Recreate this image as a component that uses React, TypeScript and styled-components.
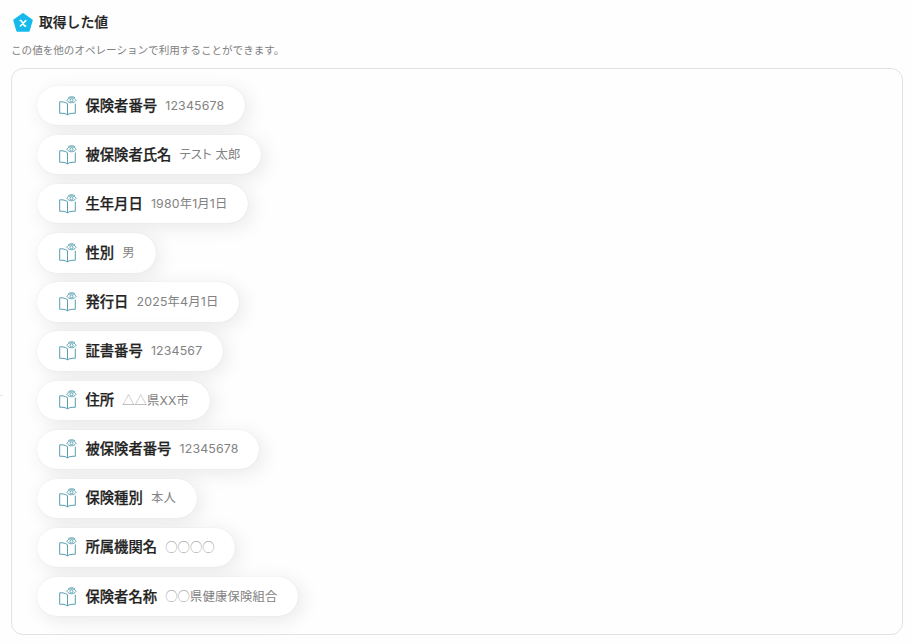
import styled, { createGlobalStyle } from 'styled-components';

const GlobalStyle = createGlobalStyle`
  * {
    box-sizing: border-box;
  }

  body {
    margin: 0;
    background-color: #fefefe;
    font-family: Inter, 'Noto Sans CJK JP', sans-serif;
  }
`;

const StyledPage = styled.div`
  display: flex;
  height: 644px;
  overflow: hidden;
`;

const StyledConnector = styled.div`
  width: 3px;
  height: 1px;
  margin: 395px 8px 0 0;
  background-color: #e8e8e8;
`;

const StyledOutput = styled.main`
  width: 892px;
`;

const StyledHeader = styled.header`
  display: flex;
  align-items: center;
  gap: 5px;
  height: 22px;
  margin: 11px 0 0 1px;

  & > svg {
    display: block;
  }
`;

const StyledTitle = styled.h1`
  margin: 0;
  color: #222;
  font-size: 13.8px;
  font-weight: 500;
  line-height: 22px;
  white-space: nowrap;
  -webkit-text-stroke: 0.25px #222;
`;

const StyledDescription = styled.p`
  margin: 9px 0 0;
  height: 26px;
  color: #808080;
  font-size: 10.6px;
  letter-spacing: -0.03px;
  line-height: 18px;
  white-space: nowrap;
`;

const StyledPanel = styled.section`
  height: 567px;
  padding: 17px 25px;
  border: 1px solid #e2e2e2;
  border-radius: 12px;
`;

const StyledValueList = styled.ul`
  display: flex;
  flex-direction: column;
  align-items: flex-start;
  gap: 9.8px;
  margin: 0;
  padding: 0;
  list-style: none;
`;

const StyledValueItem = styled.li`
  display: flex;
  align-items: center;
  height: 39.3px;
  padding: 0 20.8px 0 21px;
  border-radius: 20px;
  background-color: white;
  box-shadow: 0 0 1px rgba(0, 0, 0, 0.12), 4px 4px 20px rgba(0, 0, 0, 0.09);
  white-space: nowrap;

  & > svg {
    display: block;
    flex: none;
  }
`;

const StyledLabel = styled.span`
  margin-left: 7.4px;
  color: #222;
  font-size: 14.33px;
  font-weight: 500;
  line-height: 22px;
  -webkit-text-stroke: 0.25px #222;
`;

const StyledValue = styled.span`
  margin-left: 8.2px;
  color: #828282;
  font-size: 12.35px;
  letter-spacing: 0.16px;
  line-height: 20px;
  font-feature-settings: 'palt';
`;

const StyledMask = styled.span`
  color: #909090;
  font-family: 'Noto Sans CJK JP', sans-serif;
  font-feature-settings: normal;
  font-weight: 300;
  letter-spacing: 0;
`;

interface OutputValue {
  label: string;
  value: string;
  mask?: string;
}

const values: OutputValue[] = [
  { label: '保険者番号', value: '12345678' },
  { label: '被保険者氏名', value: 'テスト 太郎' },
  { label: '生年月日', value: '1980年1月1日' },
  { label: '性別', value: '男' },
  { label: '発行日', value: '2025年4月1日' },
  { label: '証書番号', value: '1234567' },
  { label: '住所', mask: '△△', value: '県XX市' },
  { label: '被保険者番号', value: '12345678' },
  { label: '保険種別', value: '本人' },
  { label: '所属機関名', mask: '○○○○', value: '' },
  { label: '保険者名称', mask: '○○', value: '県健康保険組合' },
];

function VariableIcon() {
  return (
    <svg width="22" height="22" viewBox="0 0 22 22">
      <path
        d="M11 3L19.8 9.2L16.7 19.8H5.3L2.2 9.2Z"
        fill="#15b9ec"
        stroke="#15b9ec"
        strokeWidth="2"
        strokeLinejoin="round"
      />
      <path
        d="M8.2 9.6H9.2L12.6 15H13.8M13.8 9.6L8.4 15"
        fill="none"
        stroke="white"
        strokeWidth="1.5"
        strokeLinecap="round"
        strokeLinejoin="round"
      />
    </svg>
  );
}

function BookIcon() {
  return (
    <svg width="20" height="20" viewBox="0 0 20 20" fill="none" stroke="#569eb0">
      <path
        d="M9.5 7.7C7.4 6.2 4.8 5.6 1.7 5.8V17.3C4.8 17.1 7.4 17.4 9.5 18.8C11.6 17.4 14.2 17.1 17.3 17.3V7.6M9.5 7.7V18.8"
        strokeWidth="1"
        strokeLinejoin="round"
      />
      <path
        d="M8.8 4.2C11 1 16 1 18.2 4.2C16 7.6 11 7.6 8.8 4.2ZM10.2 1.9C11.9 0.3 15.3 0.3 17 1.9"
        strokeWidth="0.9"
      />
      <circle cx="13.5" cy="4.3" r="1.5" strokeWidth="0.9" />
    </svg>
  );
}

export default function App() {
  return (
    <>
      <GlobalStyle />
      <StyledPage>
        <StyledConnector />
        <StyledOutput>
          <StyledHeader>
            <VariableIcon />
            <StyledTitle>取得した値</StyledTitle>
          </StyledHeader>
          <StyledDescription>この値を他のオペレーションで利用することができます。</StyledDescription>
          <StyledPanel>
            <StyledValueList>
              {values.map(({ label, value, mask }) => (
                <StyledValueItem key={label}>
                  <BookIcon />
                  <StyledLabel>{label}</StyledLabel>
                  <StyledValue>
                    {mask && <StyledMask>{mask}</StyledMask>}
                    {value}
                  </StyledValue>
                </StyledValueItem>
              ))}
            </StyledValueList>
          </StyledPanel>
        </StyledOutput>
      </StyledPage>
    </>
  );
}
